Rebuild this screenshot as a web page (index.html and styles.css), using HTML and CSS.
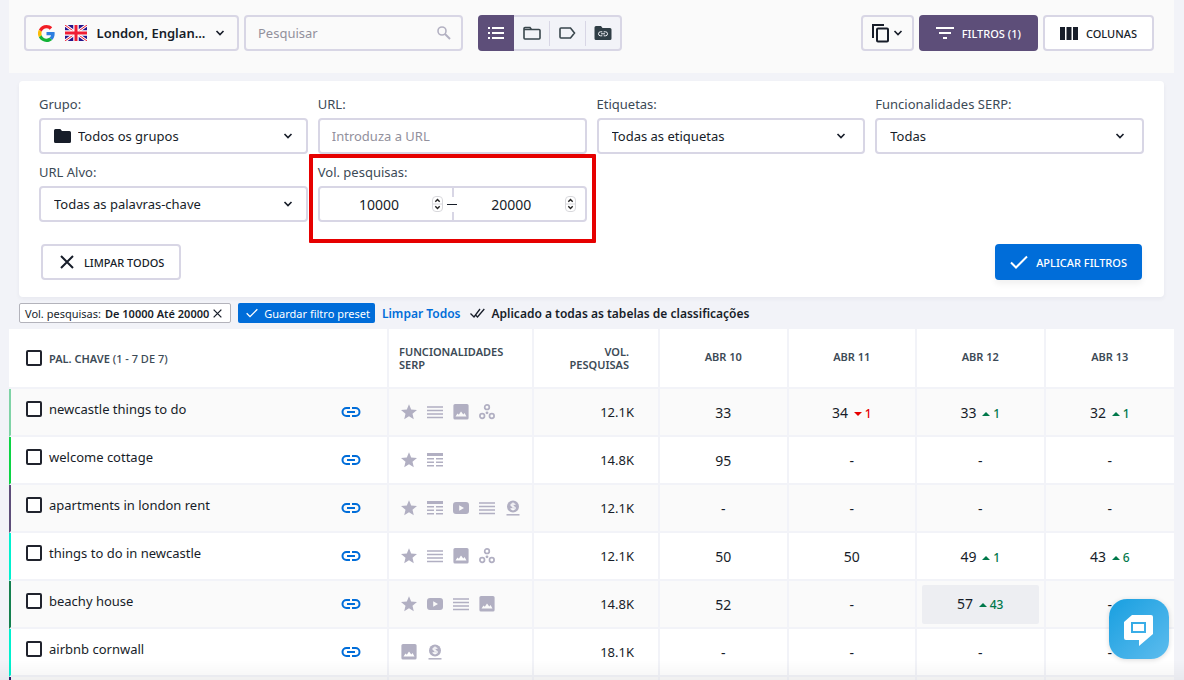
FILE: index.html
```
<!DOCTYPE html>
<html lang="pt">
<head>
    <meta charset="UTF-8">
    <meta name="viewport" content="width=device-width, initial-scale=1.0">
    <title>Classificações</title>
    <link rel="stylesheet" href="styles.css">
</head>
<body>
    <!-- icon sprite -->
    <svg class="sprite" aria-hidden="true">
        <symbol id="chevron" viewBox="0 0 10 10"><path d="M1.500 3l3.500 3.600L8.500 3" fill="none" stroke="currentColor" stroke-width="1.600"/></symbol>
        <symbol id="link" viewBox="0 0 20 12"><path d="M9 2H5.500a4 4 0 000 8H9M11 2h3.500a4 4 0 010 8H11M6 6h8" fill="none" stroke="currentColor" stroke-width="2"/></symbol>
        <symbol id="star" viewBox="1 1 22 22"><path d="M12 17.800l6.600 4.200-1.800-7.600L23 9.400l-8-.7L12 1.500 9 8.700l-8 .7 6.200 5L5.400 22z" fill="currentColor"/></symbol>
        <symbol id="lines" viewBox="0 0 16 16"><path d="M0 3h16M0 6.500h16M0 10h16M0 13.500h16" stroke="currentColor" stroke-width="1.500"/></symbol>
        <symbol id="image" viewBox="0 0 16 16"><path fill-rule="evenodd" d="M2 0h12a1.600 1.600 0 011.600 1.600v12.300a1.600 1.600 0 01-1.600 1.600H2a1.600 1.600 0 01-1.600-1.600V1.600A1.600 1.600 0 012 0zm.5 12.600h11L11.500 9l-1.200 1.500L8 7.500l-2.200 3.300L4.500 9.500z" fill="currentColor"/></symbol>
        <symbol id="nodes" viewBox="0 0 18 18"><g fill="none" stroke="currentColor" stroke-width="1.900"><circle cx="9" cy="3.600" r="2.600"/><circle cx="3.600" cy="13.500" r="2.600"/><circle cx="14.400" cy="13.500" r="2.600"/></g><circle cx="9" cy="9.900" r="1.600" fill="currentColor"/></symbol>
        <symbol id="grid" viewBox="0 0 16 16"><path d="M0 1h16v3H0zM0 6h7v1.600H0zM9 6h7v1.600H9zM0 9.500h7v1.600H0zM9 9.500h7v1.600H9zM0 13h7v1.600H0zM9 13h7v1.600H9z" fill="currentColor"/></symbol>
        <symbol id="video" viewBox="1 0 16 16"><path fill-rule="evenodd" d="M4 2h10a3 3 0 013 3v6a3 3 0 01-3 3H4a3 3 0 01-3-3V5a3 3 0 013-3zm3.200 3.200v5.600L12 8z" fill="currentColor"/></symbol>
        <symbol id="dollar" viewBox="0 0 16 16"><circle cx="8" cy="6.500" r="6" fill="currentColor"/><path d="M10.300 4.600C9.600 3.500 5.900 3.300 5.900 5.100c0 1.900 4.400.9 4.400 2.900 0 1.800-3.800 1.700-4.600.4M8 2.500v8" fill="none" stroke="#fff" stroke-width="1.100"/><path d="M1.500 14.800h13" stroke="currentColor" stroke-width="1.500"/></symbol>
        <symbol id="check" viewBox="0 0 18 14"><path d="M1 7.500l5 5L17 1.500" fill="none" stroke="currentColor" stroke-width="2"/></symbol>
        <symbol id="cross" viewBox="0 0 14 14"><path d="M1 1l12 12M13 1L1 13" fill="none" stroke="currentColor" stroke-width="2"/></symbol>
        <symbol id="spin" viewBox="0 0 11 16"><rect x=".5" y=".5" width="10" height="15" rx="3.500" fill="#fff" stroke="#d8d8dc"/><path d="M1 8h9" stroke="#d8d8dc"/><path d="M3.300 5.800l2.200-2.200 2.200 2.200M3.300 10.200l2.200 2.200 2.200-2.200" fill="none" stroke="#222" stroke-width="1.400"/></symbol>
    </svg>

    <header class="toolbar">
        <button class="btn location">
            <svg width="17" height="17" viewBox="0 0 48 48"><path fill="#f21d25" d="M24 9.500c3.500 0 6.700 1.200 9.200 3.600l6.900-6.900C35.900 2.400 30.500 0 24 0 14.600 0 6.500 5.400 2.600 13.200l8 6.200C12.400 13.700 17.700 9.500 24 9.500z"/><path fill="#2c7ee0" d="M47 24.600c0-1.600-.2-3.100-.4-4.600H24v9h12.900c-.6 3-2.200 5.500-4.800 7.200l7.700 6C44.400 38 47 31.800 47 24.600z"/><path fill="#fcbc05" d="M10.500 28.600a14.500 14.500 0 010-9.200l-8-6.200a24 24 0 000 21.600z"/><path fill="#12b336" d="M24 48c6.500 0 11.900-2.100 15.900-5.800l-7.700-6c-2.200 1.400-4.900 2.300-8.200 2.300-6.300 0-11.600-4.200-13.500-9.900l-8 6.200C6.500 42.600 14.600 48 24 48z"/></svg>
            <svg width="22" height="16" viewBox="0 0 22 16"><rect width="22" height="16" rx="1" fill="#25148c"/><path d="M0 0l22 16M22 0L0 16" stroke="#fff" stroke-width="3"/><path d="M0 0l22 16M22 0L0 16" stroke="#f01d35" stroke-width="1"/><path d="M11 0v16M0 8h22" stroke="#fff" stroke-width="5.500"/><path d="M11 0v16M0 8h22" stroke="#f01d35" stroke-width="3"/></svg>
            <span class="location-name">London, Englan...</span>
            <svg class="chev"><use href="#chevron"/></svg>
        </button>

        <div class="search">
            <input type="text" placeholder="Pesquisar" aria-label="Pesquisar">
            <svg width="14" height="14" viewBox="0 0 14 14"><circle cx="5" cy="5" r="4" fill="none" stroke="#b3b1c2" stroke-width="1.600"/><path d="M8 8l5 5" stroke="#b3b1c2" stroke-width="2"/></svg>
        </div>

        <div class="views">
            <button class="view active" aria-label="Lista"><svg width="16" height="14" viewBox="0 0 16 14"><path d="M0 2h2M4 2h12M0 7h2M4 7h12M0 12h2M4 12h12" stroke="#fff" stroke-width="2"/></svg></button>
            <button class="view" aria-label="Pastas"><svg width="18" height="15" viewBox="0 0 18 15"><path d="M2 1.500h5l1.500 2H16q1 0 1 1V12q0 1-1 1H2q-1 0-1-1V2.500q0-1 1-1zM1 3.500h8" fill="none" stroke="#39464c" stroke-width="1.600"/></svg></button>
            <button class="view" aria-label="Etiquetas"><svg width="17" height="12" viewBox="0 0 17 12"><path d="M2 1h9.500L15.500 6l-4 5H2q-1 0-1-1V2q0-1 1-1z" fill="none" stroke="#39464c" stroke-width="1.600"/></svg></button>
            <button class="view" aria-label="Grupos de URL"><svg width="18" height="14" viewBox="0 0 18 14"><path d="M2 0h5l1.500 2H16q1.500 0 1.500 1.500v9Q17.500 14 16 14H2Q.5 14 .5 12.500v-11Q.5 0 2 0z" fill="#303e46"/><path d="M8.300 5.800H6.500a2 2 0 000 4h1.800M9.700 5.800h1.800a2 2 0 010 4H9.700M7 7.800h4" fill="none" stroke="#f2f3f8" stroke-width="1"/></svg></button>
        </div>

        <div class="actions">
            <button class="btn copy" aria-label="Copiar">
                <svg width="17" height="19" viewBox="0 0 17 19"><path d="M1 14V1h11" fill="none" stroke="#171d29" stroke-width="2"/><rect x="5" y="4.500" width="11" height="13" rx="1" fill="none" stroke="#171d29" stroke-width="2"/></svg>
                <svg class="chev"><use href="#chevron"/></svg>
            </button>
            <button class="btn purple">
                <svg width="18" height="12" viewBox="0 0 18 12"><path d="M0 1h18M3 6h12M7 11h4" stroke="#fff" stroke-width="2"/></svg>
                FILTROS (1)
            </button>
            <button class="btn white">
                <svg width="18" height="13" viewBox="0 0 18 13"><path d="M0 0h5v13H0zM6.500 0h5v13h-5zM13 0h5v13h-5z" fill="#171d29"/></svg>
                COLUNAS
            </button>
        </div>
    </header>

    <form class="filters">
        <div class="fields">
            <div class="field">
                <label for="grupo">Grupo:</label>
                <div class="control">
                    <svg class="folder" width="17" height="14" viewBox="0 0 17 14"><path d="M1.500 0h4.800L8 2h7.500Q17 2 17 3.500v9q0 1.500-1.500 1.500h-14Q0 14 0 12.500v-11Q0 0 1.500 0z" fill="#171d29"/></svg>
                    <select id="grupo"><option>Todos os grupos</option></select>
                    <svg class="chev"><use href="#chevron"/></svg>
                </div>
            </div>
            <div class="field">
                <label for="url">URL:</label>
                <div class="control"><input id="url" type="text" placeholder="Introduza a URL"></div>
            </div>
            <div class="field">
                <label for="etiquetas">Etiquetas:</label>
                <div class="control multi">
                    <select id="etiquetas"><option>Todas as etiquetas</option></select>
                    <svg class="chev"><use href="#chevron"/></svg>
                </div>
            </div>
            <div class="field">
                <label for="serp">Funcionalidades SERP:</label>
                <div class="control multi">
                    <select id="serp"><option>Todas</option></select>
                    <svg class="chev"><use href="#chevron"/></svg>
                </div>
            </div>
            <div class="field">
                <label for="alvo">URL Alvo:</label>
                <div class="control">
                    <select id="alvo"><option>Todas as palavras-chave</option></select>
                    <svg class="chev"><use href="#chevron"/></svg>
                </div>
            </div>
            <div class="field highlighted">
                <label for="vol-min">Vol. pesquisas:</label>
                <div class="control range">
                    <div class="range-part"><input id="vol-min" type="number" value="10000"><svg class="spin"><use href="#spin"/></svg></div>
                    <div class="range-part"><input type="number" value="20000" aria-label="Vol. pesquisas até"><svg class="spin"><use href="#spin"/></svg></div>
                </div>
            </div>
        </div>
        <div class="filter-buttons">
            <button type="reset" class="btn white clear"><svg width="14" height="14"><use href="#cross"/></svg>LIMPAR TODOS</button>
            <button type="button" class="btn blue"><svg width="18" height="14"><use href="#check"/></svg>APLICAR FILTROS</button>
        </div>
    </form>

    <div class="applied">
        <button class="chip">Vol. pesquisas: <b>De 10000 Até 20000</b><svg width="9" height="9"><use href="#cross"/></svg></button>
        <button class="preset"><svg width="12" height="10"><use href="#check"/></svg>Guardar filtro preset</button>
        <a href="#" class="clear-link">Limpar Todos</a>
        <span class="applied-note"><svg width="15" height="10" viewBox="0 0 15 10"><path d="M.5 5.500L4 9l6-8M5.500 7l2 2 6.800-8" fill="none" stroke="#171d29" stroke-width="1.300"/></svg>Aplicado a todas as tabelas de classificações</span>
    </div>

    <table class="rankings">
        <colgroup>
            <col class="col-keyword"><col class="col-serp"><col class="col-vol"><col><col><col><col>
        </colgroup>
        <thead>
            <tr>
                <th class="keyword"><label><input type="checkbox"><span>PAL. CHAVE <i>(1 - 7 DE 7)</i></span></label></th>
                <th class="serp-head">FUNCIONALIDADES SERP</th>
                <th class="vol-head">VOL. PESQUISAS</th>
                <th class="date">ABR 10</th>
                <th class="date">ABR 11</th>
                <th class="date">ABR 12</th>
                <th class="date">ABR 13</th>
            </tr>
        </thead>
        <tbody>
            <tr>
                <td class="keyword mint"><div class="kw"><label><input type="checkbox"><span>newcastle things to do</span></label><a href="#" aria-label="URL"><svg><use href="#link"/></svg></a></div></td>
                <td><div class="serp"><svg><use href="#star"/></svg><svg><use href="#lines"/></svg><svg><use href="#image"/></svg><svg><use href="#nodes"/></svg></div></td>
                <td class="vol">12.1K</td>
                <td>33</td>
                <td>34 <span class="down">1</span></td>
                <td>33 <span class="up">1</span></td>
                <td>32 <span class="up">1</span></td>
            </tr>
            <tr>
                <td class="keyword green"><div class="kw"><label><input type="checkbox"><span>welcome cottage</span></label><a href="#" aria-label="URL"><svg><use href="#link"/></svg></a></div></td>
                <td><div class="serp"><svg><use href="#star"/></svg><svg><use href="#grid"/></svg></div></td>
                <td class="vol">14.8K</td>
                <td>95</td>
                <td>-</td>
                <td>-</td>
                <td>-</td>
            </tr>
            <tr>
                <td class="keyword violet"><div class="kw"><label><input type="checkbox"><span>apartments in london rent</span></label><a href="#" aria-label="URL"><svg><use href="#link"/></svg></a></div></td>
                <td><div class="serp"><svg><use href="#star"/></svg><svg><use href="#grid"/></svg><svg><use href="#video"/></svg><svg><use href="#lines"/></svg><svg><use href="#dollar"/></svg></div></td>
                <td class="vol">12.1K</td>
                <td>-</td>
                <td>-</td>
                <td>-</td>
                <td>-</td>
            </tr>
            <tr>
                <td class="keyword aqua"><div class="kw"><label><input type="checkbox"><span>things to do in newcastle</span></label><a href="#" aria-label="URL"><svg><use href="#link"/></svg></a></div></td>
                <td><div class="serp"><svg><use href="#star"/></svg><svg><use href="#lines"/></svg><svg><use href="#image"/></svg><svg><use href="#nodes"/></svg></div></td>
                <td class="vol">12.1K</td>
                <td>50</td>
                <td>50</td>
                <td>49 <span class="up">1</span></td>
                <td>43 <span class="up">6</span></td>
            </tr>
            <tr>
                <td class="keyword forest"><div class="kw"><label><input type="checkbox"><span>beachy house</span></label><a href="#" aria-label="URL"><svg><use href="#link"/></svg></a></div></td>
                <td><div class="serp"><svg><use href="#star"/></svg><svg><use href="#video"/></svg><svg><use href="#lines"/></svg><svg><use href="#image"/></svg></div></td>
                <td class="vol">14.8K</td>
                <td>52</td>
                <td>-</td>
                <td class="marked"><div>57 <span class="up">43</span></div></td>
                <td>-</td>
            </tr>
            <tr>
                <td class="keyword aqua"><div class="kw"><label><input type="checkbox"><span>airbnb cornwall</span></label><a href="#" aria-label="URL"><svg><use href="#link"/></svg></a></div></td>
                <td><div class="serp"><svg><use href="#image"/></svg><svg><use href="#dollar"/></svg></div></td>
                <td class="vol">18.1K</td>
                <td>-</td>
                <td>-</td>
                <td>-</td>
                <td>-</td>
            </tr>
            <tr>
                <td class="keyword indigo"></td>
                <td></td><td></td><td></td><td></td><td></td><td></td>
            </tr>
        </tbody>
    </table>

    <div class="bottom-fade"></div>

    <button class="chat" aria-label="Chat">
        <svg width="30" height="32" viewBox="0 0 30 32"><path fill-rule="evenodd" d="M8 0h19q2 0 2 2v17L15 31v-6H2q-2 0-2-2V7zM7 7v11h15V7zm2 2h11v7H9z" fill="#fff"/></svg>
    </button>
</body>
</html>
```
FILE: styles.css
```
* {
    box-sizing: border-box;
}

body {
    margin: 0;
    padding: 0 10px 0 9px;
    height: 100vh;
    overflow: hidden;
    background: #f2f3f8;
    color: #171d29;
    font-family: "Noto Sans", "Open Sans", sans-serif;
    font-size: 13px;
}

button, input, select {
    font-family: inherit;
    font-size: 13px;
    color: inherit;
}

button {
    cursor: pointer;
}

svg {
    flex: none;
}

.sprite {
    display: none;
}

.chev {
    width: 10px;
    height: 10px;
}

/* top bar */
.toolbar {
    display: flex;
    align-items: center;
    gap: 5px;
    padding: 15px 20px 22px 15px;
    background: #fafafa;
}

.btn {
    display: flex;
    align-items: center;
    justify-content: center;
    gap: 8px;
    height: 36px;
    padding: 0 15px;
    border: 2px solid #d8d6e5;
    border-radius: 4px;
    background: transparent;
    font-size: 11px;
    font-weight: 500;
    white-space: nowrap;
}

.location {
    gap: 10px;
    width: 215px;
    padding: 0 12px;
}

.location-name {
    font-size: 13px;
    font-weight: 600;
}

.search {
    display: flex;
    align-items: center;
    width: 219px;
    height: 36px;
    padding: 0 10px 0 12px;
    border: 2px solid #d8d6e5;
    border-radius: 4px;
}

.search input {
    flex: 1;
    min-width: 0;
    padding: 0;
    border: none;
    background: none;
    outline: none;
}

::placeholder {
    color: #92909c;
    opacity: 1;
}

.views {
    display: flex;
    align-items: center;
    height: 36px;
    margin-left: 10px;
    border: 2px solid #d8d6e5;
    border-left: none;
    border-radius: 4px;
    background: #f2f3f8;
}

.view {
    display: flex;
    align-items: center;
    justify-content: center;
    width: 36px;
    height: 25px;
    padding: 0;
    border: none;
    border-right: 1px solid #d8d6e5;
    background: none;
}

.view:last-child {
    width: 34px;
    border-right: none;
}

.view.active {
    height: 36px;
    border-right: none;
    border-radius: 4px 0 0 4px;
    background: #5d4e79;
}

.actions {
    display: flex;
    gap: 5px;
    margin-left: auto;
}

.copy {
    gap: 4px;
    width: 53px;
    padding: 0;
}

.purple {
    border-color: #5d4e79;
    background: #5d4e79;
    color: #fff;
}

.white {
    background: #fff;
}

/* filters */
.filters {
    margin: 8px 10px 0;
    padding: 13px 20px 17px;
    border-radius: 4px;
    background: #fff;
    box-shadow: 0 2px 4px rgba(40, 40, 80, 0.05);
}

.fields {
    display: grid;
    grid-template-columns: repeat(4, minmax(0, 1fr));
    gap: 8px 10px;
}

.field {
    position: relative;
}

.field label {
    display: block;
    margin-bottom: 4px;
    line-height: 20px;
    color: #3c4a56;
}

.control {
    display: flex;
    align-items: center;
    height: 36px;
    padding: 0 13px 0 12px;
    border: 2px solid #d8d6e5;
    border-radius: 4px;
    background: #fff;
}

.multi {
    padding-right: 17px;
}

.control select,
.control input {
    flex: 1;
    min-width: 0;
    padding: 0;
    border: none;
    outline: none;
    background: none;
    appearance: none;
}

.control select {
    padding-left: 1px;
}

.folder {
    margin: 0 6px 0 1px;
}

.range {
    padding: 0;
}

.range-part {
    position: relative;
    display: flex;
    flex: 1;
    align-items: center;
    min-width: 0;
    height: 100%;
    padding: 0 9px 0 6px;
}

.control.range input {
    font-size: 14px;
    text-align: center;
}

.range-part input::-webkit-inner-spin-button {
    display: none;
}

.spin {
    width: 11px;
    height: 16px;
}

/* divider broken by a dash between both values */
.range-part + .range-part::before {
    content: "";
    position: absolute;
    left: 0;
    top: 0;
    width: 2px;
    height: 100%;
    background: linear-gradient(#d8d6e5 9px, #fff 9px, #fff 24px, #d8d6e5 24px);
}

.range-part + .range-part::after {
    content: "";
    position: absolute;
    left: -5px;
    top: 16px;
    width: 10px;
    height: 1px;
    background: #171d29;
}

.highlighted::after {
    content: "";
    position: absolute;
    top: -8px;
    right: -9px;
    bottom: -21px;
    left: -9px;
    border: 4px solid #e60000;
    border-radius: 1px;
    pointer-events: none;
}

.filter-buttons {
    display: flex;
    justify-content: space-between;
    padding: 22px 2px 0;
}

.clear {
    gap: 10px;
    padding: 0 15px 0 17px;
}

.blue {
    padding: 0 13px;
    border-color: #006dd9;
    background: #006dd9;
    color: #fff;
    box-shadow: 0 4px 6px rgba(0, 0, 0, 0.06);
}

/* applied filters */
.applied {
    display: flex;
    align-items: center;
    gap: 7px;
    height: 20px;
    margin: 6px 10px;
    font-size: 12px;
    font-weight: 600;
    white-space: nowrap;
}

.chip, .preset {
    display: flex;
    align-items: center;
    height: 20px;
    border-radius: 2px;
    font-size: 11px;
}

.chip {
    gap: 4px;
    padding: 0 8px 0 5px;
    border: 1px solid #b3b3bb;
    background: #fff;
}

.chip b {
    font-weight: 600;
}

.preset {
    gap: 6px;
    padding: 0 5px 0 8px;
    border: none;
    background: #006dd9;
    color: #fff;
}

.clear-link {
    color: #006dd9;
    text-decoration: none;
}

.applied-note {
    display: flex;
    align-items: center;
    gap: 6px;
    margin-left: 3px;
}

/* rankings table */
.rankings {
    width: 100%;
    table-layout: fixed;
    border-collapse: separate;
    border-spacing: 0;
    background: #fff;
}

.col-keyword {
    width: 380px;
}

.col-serp {
    width: 145px;
}

.col-vol {
    width: 126px;
}

.rankings th,
.rankings td {
    padding: 0;
    border-right: 2px solid #f2f3f8;
    border-bottom: 2px solid #f2f3f8;
    text-align: center;
}

.rankings th:last-child,
.rankings td:last-child {
    border-right: none;
}

.rankings th {
    height: 60px;
    color: #3c4a56;
    font-size: 11px;
    font-weight: 600;
    line-height: 13px;
}

.rankings th i {
    font-style: normal;
    font-weight: 500;
}

.rankings .date {
    padding-bottom: 4px;
}

.rankings td {
    height: 48px;
    font-size: 14px;
}

.rankings tbody tr:nth-child(odd) {
    background: #fafafa;
}

.rankings .serp-head {
    padding: 0 20px 0 10px;
    text-align: left;
}

.rankings .vol-head {
    padding: 0 29px;
    text-align: right;
}

.rankings .vol {
    padding-right: 24px;
    font-size: 13px;
    text-align: right;
}

.rankings .keyword {
    padding-left: 17px;
    text-align: left;
}

.rankings td.keyword {
    padding-left: 15px;
    border-left: 2px solid;
    font-size: 13px;
}

.rankings td.mint { border-left-color: #7fd3a6; }
.rankings td.green { border-left-color: #0bd344; }
.rankings td.violet { border-left-color: #5d4e79; }
.rankings td.aqua { border-left-color: #00f0cf; }
.rankings td.forest { border-left-color: #14804f; }
.rankings td.indigo { border-left-color: #33206b; }

.keyword label {
    display: flex;
    align-items: center;
    gap: 7px;
}

.keyword input {
    width: 16px;
    height: 16px;
    margin: 0;
    border: 2px solid #20232d;
    border-radius: 2px;
    background: #fff;
    appearance: none;
}

.kw {
    display: flex;
    align-items: center;
    justify-content: space-between;
    padding-right: 26px;
}

.kw label {
    padding-bottom: 6px;
}

.kw a {
    display: flex;
    color: #006dd9;
}

.kw a svg {
    width: 20px;
    height: 12px;
}

.serp {
    display: flex;
    gap: 10px;
    padding-left: 12px;
    color: #b1afc2;
}

.serp svg {
    width: 16px;
    height: 16px;
}

.up, .down {
    margin-left: 2px;
    font-size: 12px;
    font-weight: 500;
}

.up {
    color: #00784a;
}

.down {
    color: #e60000;
}

.up::before,
.down::before {
    content: "";
    display: inline-block;
    margin-right: 3px;
    border: 4px solid transparent;
    border-top-width: 0;
    border-bottom-color: currentColor;
    vertical-align: 2px;
}

.down::before {
    border-top: 4px solid currentColor;
    border-bottom-width: 0;
}

.marked div {
    margin: 0 5px;
    border-radius: 2px;
    background: #edeef2;
    line-height: 38px;
}

/* shade along the lower window edge */
.bottom-fade {
    position: fixed;
    right: 0;
    bottom: 0;
    left: 0;
    height: 20px;
    background: linear-gradient(rgba(0, 0, 0, 0), rgba(0, 0, 0, 0.04));
    pointer-events: none;
}

/* floating chat button */
.chat {
    position: fixed;
    right: 15px;
    bottom: 21px;
    display: flex;
    align-items: center;
    justify-content: center;
    width: 60px;
    height: 60px;
    padding: 3px 0 0;
    border: none;
    border-radius: 18px;
    background: linear-gradient(135deg, #189fe0, #5dbcee);
    box-shadow: 0 1px 5px rgba(0, 0, 0, 0.15);
}
```
